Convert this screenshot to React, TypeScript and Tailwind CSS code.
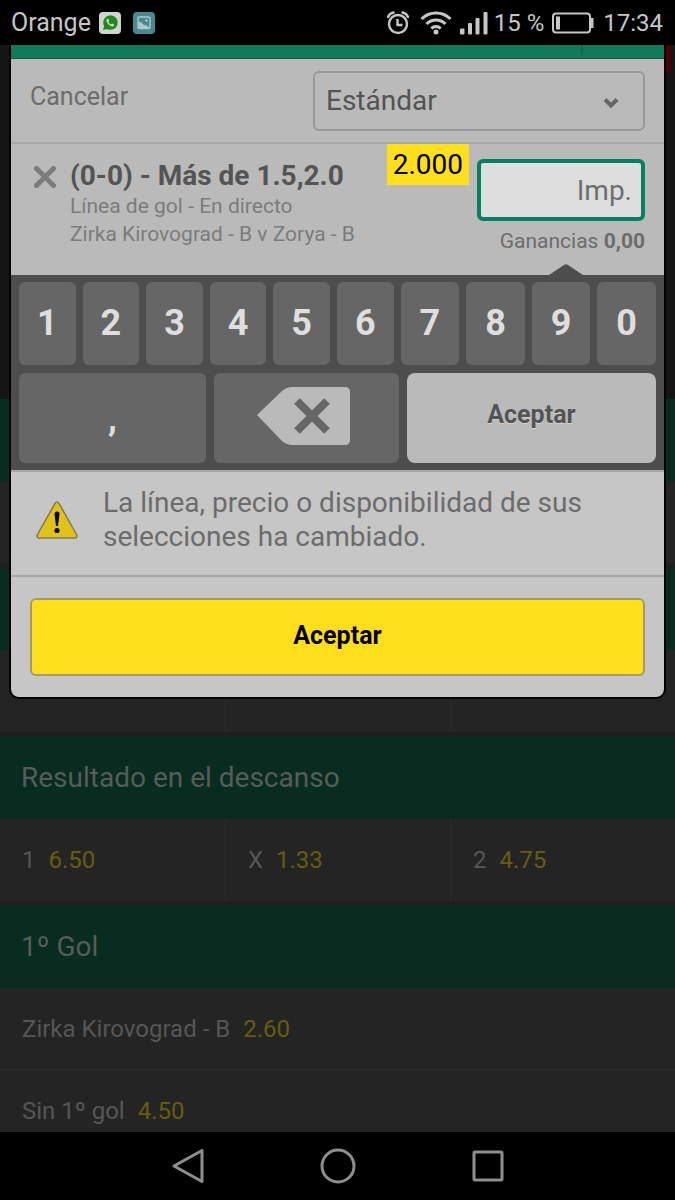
import React, { useState } from "react";

interface Selection {
    name: string;
    odds: string;
}

interface Market {
    title: string;
    columns: boolean;
    selections: Selection[];
}

const DIGITS = ["1", "2", "3", "4", "5", "6", "7", "8", "9", "0"];

const EMPTY_ROW: Selection[] = [
    { name: "", odds: "" },
    { name: "", odds: "" },
    { name: "", odds: "" },
];

const MARKETS: Market[] = [
    { title: "", columns: true, selections: EMPTY_ROW },
    { title: "", columns: true, selections: EMPTY_ROW },
    {
        title: "Resultado en el descanso",
        columns: true,
        selections: [
            { name: "1", odds: "6.50" },
            { name: "X", odds: "1.33" },
            { name: "2", odds: "4.75" },
        ],
    },
    {
        title: "1º Gol",
        columns: false,
        selections: [
            { name: "Zirka Kirovograd - B", odds: "2.60" },
            { name: "Sin 1º gol", odds: "4.50" },
        ],
    },
];

const StatusBar: React.FC = () => (
    <header className="flex h-[45px] shrink-0 items-center justify-between bg-black pr-3 pl-[11px] text-[#c6c6c6]">
        <div className="flex items-center">
            <span className="text-[25px] leading-[30px]">Orange</span>
            <svg className="ml-2 size-[22px]" viewBox="0 0 22 22">
                <rect width="22" height="22" rx="4" fill="#d2d2d2" />
                <path d="M4 18l1.100-4A7.200 7.200 0 1 1 8 16.900z" fill="#1d8a1d" />
                <path
                    d="M8.300 6.700c-1.300.8-1.200 2.500.5 4.700s3.800 3.600 5.400 2.900c.9-.5 1.100-1.300.8-1.800l-1.900-1-1.200 1.100c-1.100-.5-2-1.500-2.500-2.600l.9-1.100-.9-2z"
                    fill="#d8d8d8"
                />
            </svg>
            <svg className="ml-3 size-[22px]" viewBox="0 0 22 22">
                <rect width="22" height="22" rx="4" fill="#438a91" />
                <rect x="5" y="5" width="12" height="11.500" rx="1" fill="none" stroke="#b4c6c8" strokeWidth="1.400" />
                <path d="M5.500 9.500c3 0 4 3 6 3.500s3 .5 5 3H5.500z" fill="#b4c6c8" />
                <circle cx="13.500" cy="8.500" r="1.300" fill="#b4c6c8" />
            </svg>
        </div>
        <div className="flex items-center text-[24px] leading-[30px]">
            <svg className="h-6 w-[22px]" viewBox="0 0 22 24" fill="none" stroke="currentColor" strokeWidth="2.400">
                <circle cx="11" cy="13" r="9" />
                <path d="M10.500 8v6h5" />
                <path d="M1 6C2 3.500 4 2 6.500 1.500M21 6C20 3.500 18 2 15.500 1.500" strokeLinecap="round" />
            </svg>
            <svg className="ml-[11px] h-6 w-8" viewBox="0 0 32 24" fill="none" stroke="currentColor" strokeWidth="3">
                <path d="M1.500 8a20.500 20.500 0 0 1 29 0" />
                <path d="M6.500 13a13.400 13.400 0 0 1 19 0" />
                <path d="M11.300 17.500a6.600 6.600 0 0 1 9.400 0" />
                <circle cx="16" cy="21" r="2.500" fill="currentColor" stroke="none" />
            </svg>
            <svg className="ml-2 h-6 w-7" viewBox="0 0 28 24" fill="currentColor">
                <rect x="0" y="17.500" width="4.500" height="6" rx="1" />
                <rect x="8" y="12" width="4" height="11.500" rx="1" />
                <rect x="15.500" y="7" width="4" height="16.500" rx="1" />
                <rect x="23.500" y="1" width="4" height="22.500" rx="1" />
            </svg>
            <span className="ml-[6px]">15 %</span>
            <svg className="ml-2 h-[22px] w-[42px]" viewBox="0 0 42 22" fill="none" stroke="currentColor" strokeWidth="2">
                <rect x="1" y="1.500" width="37" height="19" rx="3" />
                <rect x="4" y="4.500" width="4" height="13" fill="currentColor" stroke="none" />
                <path d="M40 6v10" strokeWidth="3" />
            </svg>
            <span className="ml-[9px]">17:34</span>
        </div>
    </header>
);

const MarketBlock: React.FC<{ market: Market }> = ({ market }) => (
    <section className="mb-[5px]">
        <h2 className="flex h-[82px] items-center bg-[#082c20] pl-[21px] text-[28px] text-[#555c59]">{market.title}</h2>
        <div className={market.columns ? "grid grid-cols-3" : "grid grid-cols-1 divide-y divide-[#2b2b2b]"}>
            {market.selections.map((s, i) => (
                <button
                    key={i}
                    className={
                        "flex h-[82px] items-center gap-[13px] bg-[#242424] pl-[22px] text-[24px] text-[#565656]" +
                        (market.columns && i > 0 ? " border-l border-[#2b2b2b]" : "")
                    }
                >
                    <span>{s.name}</span>
                    <span className="text-[#665d0c]">{s.odds}</span>
                </button>
            ))}
        </div>
    </section>
);

const Keypad: React.FC<{ onKey: (key: string) => void; onDelete: () => void }> = ({ onKey, onDelete }) => (
    <div className="relative flex flex-col gap-2 bg-[#4d4d4d] px-2 py-[7px]">
        {/* Pointer towards the stake box */}
        <svg className="absolute -top-[11px] right-[81px] h-[11px] w-[34px]" viewBox="0 0 34 11">
            <path d="M0 11L15 1q2-1.500 4 0l15 10z" fill="#4d4d4d" />
        </svg>
        <div className="grid grid-cols-[repeat(6,56fr)_repeat(4,58fr)] gap-[7px]">
            {DIGITS.map((digit) => (
                <button
                    key={digit}
                    onClick={() => onKey(digit)}
                    className="h-[83px] rounded-md bg-[#666666] pb-[2px] text-[36px] font-bold text-[#dedede]"
                >
                    {digit}
                </button>
            ))}
        </div>
        <div className="grid grid-cols-[187fr_185fr_249fr] gap-2">
            <button
                onClick={() => onKey(",")}
                className="h-[90px] rounded-md bg-[#666666] text-[36px] font-bold text-[#dedede]"
            >
                ,
            </button>
            <button
                onClick={onDelete}
                aria-label="Borrar"
                className="flex h-[90px] items-center justify-center rounded-md bg-[#666666] pr-[6px] pb-1"
            >
                <svg className="h-[58px] w-[93px]" viewBox="0 0 93 58">
                    <path d="M0 28L25 4q5-4 10-4h53q5 0 5 5v48q0 5-5 5H35q-5 0-10-4z" fill="#bababa" />
                    <path d="M40 14l30 30M70 14L40 44" stroke="#666666" strokeWidth="8" strokeLinejoin="round" />
                </svg>
            </button>
            <button className="h-[90px] rounded-lg bg-[#bababa] pb-[6px] text-[25px] font-bold text-[#545454] [text-shadow:0_1px_0_#d4d4d4]">
                Aceptar
            </button>
        </div>
    </div>
);

const BetSlip: React.FC = () => {
    const [stake, setStake] = useState("");

    return (
        <div className="absolute inset-x-[11px] top-0 overflow-hidden rounded-b-lg bg-[#c6c6c6] shadow-[0_0_0_2px_#000000]">
            <div className="flex h-[14px] justify-end border-b border-[#0a5a40] bg-[#127a59]">
                <div className="mr-[81px] h-[10px] w-[2px] bg-[#0d6a4c]" />
            </div>

            <div className="flex items-start justify-between border-b-2 border-[#a9a9a9] bg-[#bababa] px-[19px] pt-3 pb-[11px]">
                <button className="h-[52px] text-[25px] text-[#6c6c6c]">Cancelar</button>
                <div className="relative w-[332px]">
                    <select
                        aria-label="Tipo de apuesta"
                        className="h-[60px] w-full appearance-none rounded-md border-2 border-[#999999] bg-transparent px-[11px] text-[28px] text-[#545454]"
                    >
                        <option>Estándar</option>
                    </select>
                    <svg
                        className="pointer-events-none absolute top-[26px] right-[26px] h-3 w-4"
                        viewBox="0 0 16 12"
                        fill="none"
                        stroke="#666666"
                        strokeWidth="4"
                    >
                        <path d="M2 2.500l6 6 6-6" />
                    </svg>
                </div>
            </div>

            <div className="flex items-start bg-[#bababa] pr-[19px] pl-[23px] pb-5">
                <button aria-label="Eliminar selección" className="mt-[22px] mr-[14px]">
                    <svg className="size-[22px]" viewBox="0 0 22 22" stroke="#7c7c7c" strokeWidth="5">
                        <path d="M2.500 2.500l17 17M19.500 2.500l-17 17" strokeLinecap="round" />
                    </svg>
                </button>
                <div className="flex-1 pt-4 text-[21px] leading-[28px] text-[#7c7c7c]">
                    <p className="text-[28px] leading-[32px] font-bold text-[#545454]">(0-0) - Más de 1.5,2.0</p>
                    <p>Línea de gol - En directo</p>
                    <p>Zirka Kirovograd - B v Zorya - B</p>
                </div>
                <span className="bg-[#ffdf1b] px-[6px] text-[28px] leading-[41px] text-black">2.000</span>
                <div className="ml-2 w-[168px] pt-[15px] text-right">
                    <input
                        aria-label="Importe"
                        placeholder="Imp."
                        value={stake}
                        onChange={(e) => setStake(e.target.value)}
                        className="block h-[62px] w-full rounded-md border-4 border-[#058060] bg-[#dedede] px-[9px] text-right text-[28px] text-[#545454] placeholder:text-[#6e6e6e]"
                    />
                    <p className="mt-[6px] text-[21px] leading-[28px] text-[#6c6c6c]">
                        Ganancias <b>0,00</b>
                    </p>
                </div>
            </div>

            <Keypad onKey={(key) => setStake(stake + key)} onDelete={() => setStake(stake.slice(0, -1))} />

            <div className="flex items-center border-y-2 border-[#a6a6a6] pt-[14px] pr-[19px] pb-[21px] pl-[25px]">
                <svg className="h-[38px] w-[42px] shrink-0" viewBox="0 0 42 38">
                    <path
                        d="M19 2.500q2-3 4 0l17.500 31q1.500 3.500-2 3.500h-35q-3.500 0-2-3.500z"
                        fill="#e0c31a"
                        stroke="#857b4a"
                        strokeWidth="1.500"
                    />
                    <path d="M18.500 13q0-2.500 2.500-2.500t2.500 2.500L22 25h-2z" fill="#0a0a0a" />
                    <circle cx="21" cy="29.500" r="2.600" fill="#0a0a0a" />
                </svg>
                <p className="ml-[25px] text-[28px] leading-[34px] text-[#6c6c6c]">
                    La línea, precio o disponibilidad de sus selecciones ha cambiado.
                </p>
            </div>

            <div className="px-[19px] py-[21px]">
                <button className="h-[78px] w-full rounded-md border-2 border-[#a39a66] bg-[#ffdf1b] pb-[2px] text-[25px] font-bold text-black">
                    Aceptar
                </button>
            </div>
        </div>
    );
};

const App: React.FC = () => (
    <div className="flex h-screen flex-col bg-black font-['Roboto',sans-serif]">
        <StatusBar />

        <main className="relative min-h-0 flex-1 overflow-hidden bg-[#1f1f1f]">
            {/* Match tracker, hidden behind the bet slip */}
            <div className="flex h-[354px] justify-end bg-[#151515]">
                <div className="mr-1 h-[27px] w-[5px] bg-[#4a0000]" />
            </div>
            {MARKETS.map((market, i) => (
                <MarketBlock key={i} market={market} />
            ))}
            <BetSlip />
        </main>

        <nav className="flex h-[68px] shrink-0 items-center justify-center gap-[114px] bg-black">
            <button aria-label="Atrás">
                <svg className="size-9" viewBox="0 0 36 36" fill="none" stroke="#8e8e8e" strokeWidth="3" strokeLinejoin="round">
                    <path d="M32 2.500v31L4 18z" />
                </svg>
            </button>
            <button aria-label="Inicio">
                <svg className="size-9" viewBox="0 0 36 36" fill="none" stroke="#8e8e8e" strokeWidth="3">
                    <circle cx="18" cy="18" r="16" />
                </svg>
            </button>
            <button aria-label="Recientes">
                <svg className="size-9" viewBox="0 0 36 36" fill="none" stroke="#8e8e8e" strokeWidth="3">
                    <rect x="4" y="4" width="28" height="28" rx="1" />
                </svg>
            </button>
        </nav>
    </div>
);

export default App;
